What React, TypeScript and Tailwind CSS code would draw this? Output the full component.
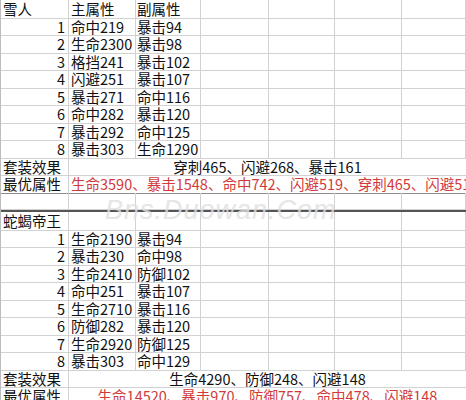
type StatRow = { n: number; main: string; sub: string };

type Block = {
  name: string;
  rows: StatRow[];
  set: string;
  best: string;
  bestAlign: 'left' | 'center';
};

const blocks: Block[] = [
  {
    name: '雪人',
    rows: [
      { n: 1, main: '命中219', sub: '暴击94' },
      { n: 2, main: '生命2300', sub: '暴击98' },
      { n: 3, main: '格挡241', sub: '暴击102' },
      { n: 4, main: '闪避251', sub: '暴击107' },
      { n: 5, main: '暴击271', sub: '命中116' },
      { n: 6, main: '命中282', sub: '暴击120' },
      { n: 7, main: '暴击292', sub: '命中125' },
      { n: 8, main: '暴击303', sub: '生命1290' },
    ],
    set: '穿刺465、闪避268、暴击161',
    best: '生命3590、暴击1548、命中742、闪避519、穿刺465、闪避519',
    bestAlign: 'left',
  },
  {
    name: '蛇蝎帝王',
    rows: [
      { n: 1, main: '生命2190', sub: '暴击94' },
      { n: 2, main: '暴击230', sub: '命中98' },
      { n: 3, main: '生命2410', sub: '防御102' },
      { n: 4, main: '命中251', sub: '暴击107' },
      { n: 5, main: '生命2710', sub: '暴击116' },
      { n: 6, main: '防御282', sub: '暴击120' },
      { n: 7, main: '生命2920', sub: '防御125' },
      { n: 8, main: '暴击303', sub: '命中129' },
    ],
    set: '生命4290、防御248、闪避148',
    best: '生命14520、暴击970、防御757、命中478、闪避148',
    bestAlign: 'center',
  },
];

// column widths read off the sheet grid
const rowCls = 'grid grid-cols-[68px_67px_65px_68px_66px_67px_1fr] h-[17.5px] leading-[17.5px]';
const cell = 'border-r border-b border-[#d2d2d2] whitespace-nowrap';

function EmptyCells({ count }: { count: number }) {
  return (
    <>
      {Array.from({ length: count }).map((_, i) => (
        <div key={i} className={cell} />
      ))}
    </>
  );
}

function SheetBlock({ block, last }: { block: Block; last?: boolean }) {
  const first = block.name === '雪人';
  return (
    <div>
      <div className={rowCls}>
        <div className={`${cell} pl-[2px]`}>{block.name}</div>
        <div className={`${cell} pl-[2px]`}>{first ? '主属性' : ''}</div>
        <div className={`${cell} pl-[1px]`}>{first ? '副属性' : ''}</div>
        <EmptyCells count={4} />
      </div>
      {block.rows.map((r) => (
        <div key={r.n} className={rowCls}>
          <div className={`${cell} text-right pr-[3px]`}>{r.n}</div>
          <div className={`${cell} pl-[2px]`}>{r.main}</div>
          <div className={`${cell} pl-[1px]`}>{r.sub}</div>
          <EmptyCells count={4} />
        </div>
      ))}
      <div className={rowCls}>
        <div className={`${cell} pl-[2px]`}>套装效果</div>
        <div className="col-span-6 border-b border-[#d2d2d2] text-center whitespace-nowrap">
          {block.set}
        </div>
      </div>
      <div className={rowCls}>
        <div className={`${cell} pl-[2px] ${last ? '' : 'border-b-[#8c8c8c]'}`}>最优属性</div>
        <div
          className={`col-span-6 border-b whitespace-nowrap overflow-hidden text-[#d23a3a] ${
            last ? 'border-[#d2d2d2]' : 'border-[#8c8c8c]'
          } ${block.bestAlign === 'left' ? 'pl-[2px] text-left' : 'text-center'}`}
        >
          {block.best}
        </div>
      </div>
    </div>
  );
}

export default function App() {
  return (
    <div
      className="relative w-[466px] h-[400px] overflow-hidden bg-white text-[14.5px] text-[#111111] border-l border-[#bdbdbd]"
      style={{ fontFamily: '"Noto Sans CJK SC", "Noto Sans", sans-serif' }}
    >
      <SheetBlock block={blocks[0]} />
      <div className={rowCls}>
        <EmptyCells count={7} />
      </div>
      <div className="h-[2px] bg-[#555555]" />
      <SheetBlock block={blocks[1]} last />
      <div
        className="pointer-events-none absolute left-[104px] top-[190px] text-[27px] italic tracking-[1px] text-[#e0e0e0] opacity-80"
        style={{ fontFamily: '"Liberation Sans", sans-serif' }}
      >
        Bns.Duowan.Com
      </div>
    </div>
  );
}
